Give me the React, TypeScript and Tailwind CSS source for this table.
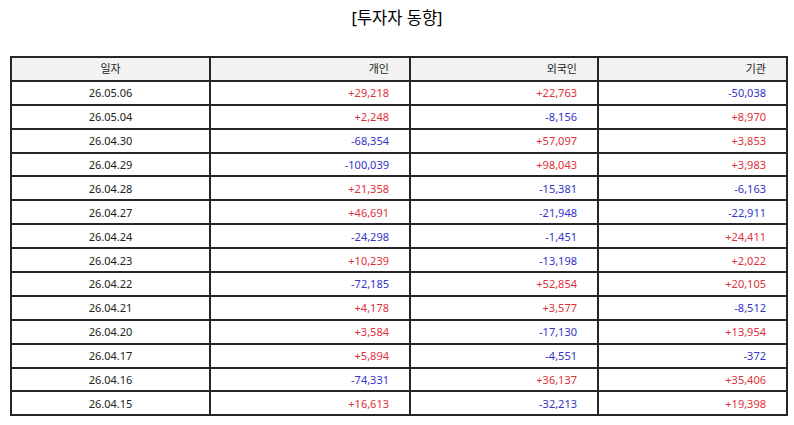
import React from "react";

const rows: [string, string, string, string][] = [
  ["26.05.06", "+29,218", "+22,763", "-50,038"],
  ["26.05.04", "+2,248", "-8,156", "+8,970"],
  ["26.04.30", "-68,354", "+57,097", "+3,853"],
  ["26.04.29", "-100,039", "+98,043", "+3,983"],
  ["26.04.28", "+21,358", "-15,381", "-6,163"],
  ["26.04.27", "+46,691", "-21,948", "-22,911"],
  ["26.04.24", "-24,298", "-1,451", "+24,411"],
  ["26.04.23", "+10,239", "-13,198", "+2,022"],
  ["26.04.22", "-72,185", "+52,854", "+20,105"],
  ["26.04.21", "+4,178", "+3,577", "-8,512"],
  ["26.04.20", "+3,584", "-17,130", "+13,954"],
  ["26.04.17", "+5,894", "-4,551", "-372"],
  ["26.04.16", "-74,331", "+36,137", "+35,406"],
  ["26.04.15", "+16,613", "-32,213", "+19,398"],
];

function Num({ v }: { v: string }) {
  const cls = v.startsWith("-") ? "text-[#3434c8]" : "text-[#e0303a]";
  return (
    <td className={`border-2 border-[#262626] h-[23.9px] p-0 pr-[20px] text-right ${cls}`}>{v}</td>
  );
}

export default function App() {
  return (
    <div
      className="w-[794px] h-[425px] bg-white flex flex-col"
      style={{ fontFamily: '"Noto Sans", "Noto Sans CJK KR", sans-serif' }}
    >
      <div className="h-[36px] flex items-center justify-center text-[16.5px] text-black pt-[1px]">
        [투자자 동향]
      </div>
      <div className="pt-[20px] pl-[10px]">
        <table className="border-collapse w-[776px] text-[11px] leading-none text-[#222] table-fixed">
          <colgroup>
            <col className="w-[199px]" />
            <col className="w-[200px]" />
            <col className="w-[188px]" />
            <col className="w-[189px]" />
          </colgroup>
          <thead>
            <tr className="bg-[#f2f2f2]">
              <th className="border-2 border-[#262626] h-[23.9px] p-0 font-normal text-center">일자</th>
              <th className="border-2 border-[#262626] p-0 pr-[20px] font-normal text-right">개인</th>
              <th className="border-2 border-[#262626] p-0 pr-[20px] font-normal text-right">외국인</th>
              <th className="border-2 border-[#262626] p-0 pr-[20px] font-normal text-right">기관</th>
            </tr>
          </thead>
          <tbody>
            {rows.map((r) => (
              <tr key={r[0]}>
                <td className="border-2 border-[#262626] h-[23.9px] p-0 text-center">{r[0]}</td>
                <Num v={r[1]} />
                <Num v={r[2]} />
                <Num v={r[3]} />
              </tr>
            ))}
          </tbody>
        </table>
      </div>
    </div>
  );
}
